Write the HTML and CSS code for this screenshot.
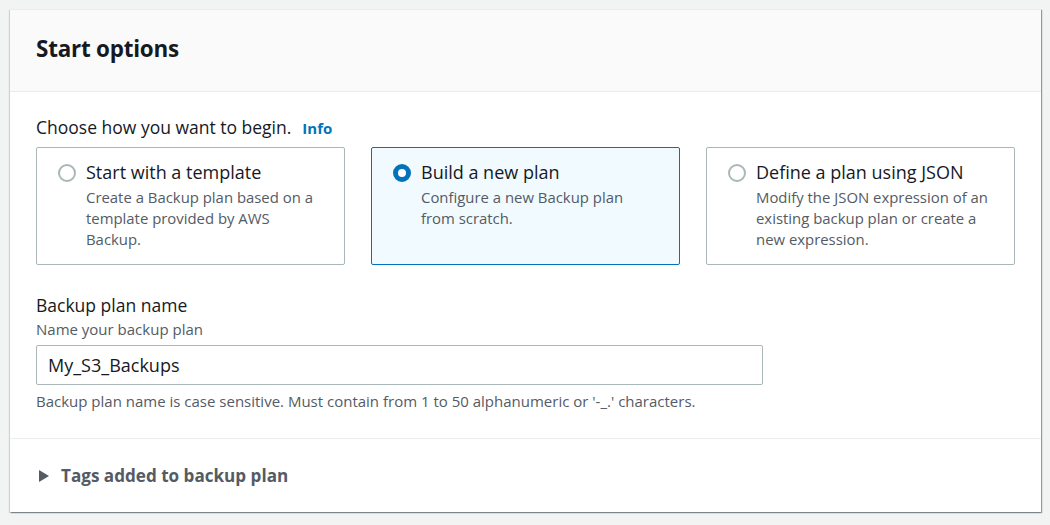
FILE: index.html
```html
<!DOCTYPE html>
<html>
<head>
<meta charset="utf-8">
<link rel="stylesheet" href="styles.css">
</head>
<body>
<div class="card">
  <div class="card-header">
    <h2 class="title">Start options</h2>
  </div>
  <div class="card-body">
    <div class="label-row">
      <span class="label">Choose how you want to begin.</span>
      <a class="info">Info</a>
    </div>
    <div class="tiles">
      <div class="tile">
        <span class="radio"></span>
        <div class="tile-text">
          <div class="tile-title">Start with a template</div>
          <div class="tile-desc">Create a Backup plan based on a template provided by AWS Backup.</div>
        </div>
      </div>
      <div class="tile selected">
        <span class="radio checked"></span>
        <div class="tile-text">
          <div class="tile-title">Build a new plan</div>
          <div class="tile-desc">Configure a new Backup plan from scratch.</div>
        </div>
      </div>
      <div class="tile">
        <span class="radio"></span>
        <div class="tile-text">
          <div class="tile-title">Define a plan using JSON</div>
          <div class="tile-desc">Modify the JSON expression of an existing backup plan or create a new expression.</div>
        </div>
      </div>
    </div>
    <div class="field">
      <div class="field-label">Backup plan name</div>
      <div class="field-desc">Name your backup plan</div>
      <div class="input">My_S3_Backups</div>
      <div class="field-hint">Backup plan name is case sensitive. Must contain from 1 to 50 alphanumeric or '-_.' characters.</div>
    </div>
  </div>
  <div class="card-footer">
    <svg class="caret" width="12" height="14" viewBox="0 0 12 14"><path d="M1 1 L11 7 L1 13 Z" fill="#545b64"/></svg>
    <span class="tags">Tags added to backup plan</span>
  </div>
</div>
</body>
</html>
```
FILE: styles.css
```css
* { box-sizing: border-box; }
html, body { margin: 0; padding: 0; }
body {
  background: #f2f3f3;
  font-family: "Open Sans", "Noto Sans", sans-serif;
  color: #16191f;
  padding: 9px 9px 0 10px;
  width: 1050px;
  height: 525px;
  overflow: hidden;
}
.card {
  width: 1031px;
  background: #fff;
  box-shadow: 1px 1px 1px 0 rgba(0,28,36,0.3), 1px 1px 1px 0 rgba(0,28,36,0.15), -1px 1px 1px 0 rgba(0,28,36,0.15);
  border-top: 1px solid #eaeded;
}
.card-header {
  background: #fafafa;
  border-bottom: 1px solid #eaeded;
  height: 82px;
  padding: 0 26px;
  display: flex;
  align-items: center;
}
.title {
  margin: 0;
  font-size: 22.4px;
  font-weight: 700;
  letter-spacing: -0.2px;
  color: #16191f;
  padding-bottom: 4px;
}
.card-body {
  padding: 23px 26px 26px;
  border-bottom: 1px solid #eaeded;
}
.label-row { display: flex; align-items: baseline; gap: 11px; height: 24px; }
.label { font-size: 17.5px; }
.info { font-size: 15px; font-weight: 700; color: #0073bb; }
.tiles {
  display: grid;
  grid-template-columns: 309px 309px 309px;
  column-gap: 26px;
  margin-top: 8px;
}
.tile {
  height: 118px;
  border: 1px solid #aab7b8;
  border-radius: 2px;
  display: flex;
  padding: 12px 22px 0 21px;
  gap: 10px;
}
.tile.selected { background: #f1faff; border-color: #0073bb; }
.radio {
  flex: none;
  width: 18px;
  height: 18px;
  border-radius: 50%;
  border: 2px solid #aab7b8;
  margin-top: 4px;
  background: #fff;
}
.radio.checked { border: 5px solid #0073bb; }
.tile-title { font-size: 18px; line-height: 24px; color: #16191f; }
.tile-desc { font-size: 14.9px; line-height: 21px; color: #545b64; margin-top: 3px; }
.field { margin-top: 28px; }
.field-label { font-size: 17.5px; line-height: 24px; }
.field-desc { font-size: 15px; line-height: 21px; color: #545b64; margin-top: 2px; }
.input {
  width: 727px;
  height: 40px;
  border: 1px solid #aab7b8;
  border-radius: 2px;
  margin-top: 5px;
  padding: 0 11px;
  font-size: 18px;
  line-height: 38px;
}
.field-hint { font-size: 15px; line-height: 21px; color: #545b64; margin-top: 6px; }
.card-footer {
  height: 73px;
  display: flex;
  align-items: center;
  padding: 0 26px 0 28px;
  gap: 11px;
}
.caret { display: block; }
.tags { font-size: 17.1px; font-weight: 700; color: #545b64; }
```
